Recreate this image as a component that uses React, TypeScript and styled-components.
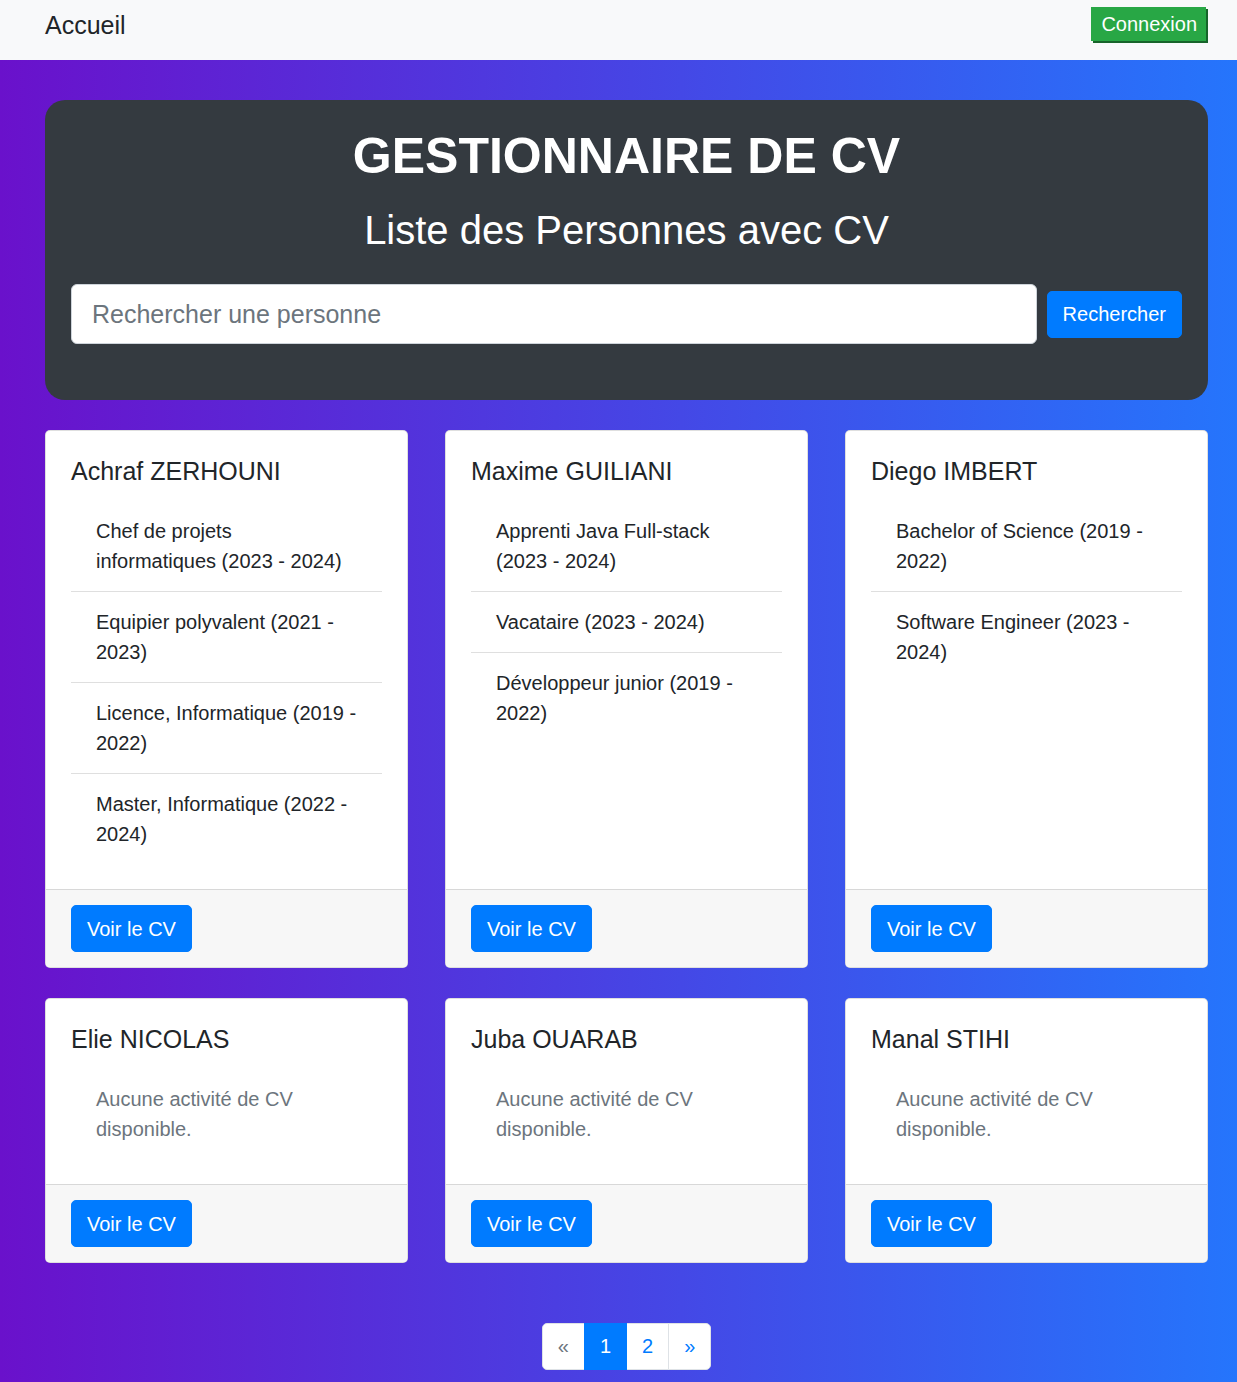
import React from "react";
import styled, { createGlobalStyle, css } from "styled-components";

const GlobalStyle = createGlobalStyle`
  html { font-size: 20px; }
  body {
    margin: 0;
    font-family: "Liberation Sans", Arial, Helvetica, sans-serif;
    color: #212529;
    line-height: 1.5;
    background: #fff;
  }
  * { box-sizing: border-box; }
`;

const Navbar = styled.nav`
  height: 60px;
  background: #f8f9fa;
  display: flex;
  justify-content: space-between;
  align-items: flex-start;
  padding: 7px 31px 0 45px;
`;

const Brand = styled.a`
  font-size: 25px;
  line-height: 36px;
  color: #212529;
  text-decoration: none;
`;

const LoginButton = styled.button`
  font-family: inherit;
  font-size: 20px;
  line-height: 24px;
  padding: 5px 9px 5px 10px;
  background: #28a745;
  color: #fff;
  border: none;
  border-radius: 0;
  box-shadow: 2px 2px 0 #17642a;
  cursor: pointer;
`;

const Main = styled.main`
  min-height: calc(100vh - 60px);
  background: linear-gradient(to right, #6a11cb, #2575fc);
  padding: 40px 29px 20px 45px;
`;

const Jumbotron = styled.section`
  background: #343a40;
  color: #fff;
  border-radius: 20px;
  padding: 26px 26px 56px;
  text-align: center;
`;

const Title = styled.h1`
  font-size: 50px;
  line-height: 60px;
  font-weight: 700;
  margin: 0 0 20px;
`;

const Subtitle = styled.h2`
  font-size: 40px;
  line-height: 48px;
  font-weight: 400;
  margin: 0 0 30px;
`;

const SearchForm = styled.form`
  display: flex;
  align-items: center;
`;

const SearchInput = styled.input`
  flex: 1;
  height: 60px;
  font-family: inherit;
  font-size: 25px;
  padding: 0 20px;
  border: 1px solid #ced4da;
  border-radius: 6px;
  color: #495057;
  background: #fff;
  &::placeholder { color: #6c757d; }
`;

const PrimaryButton = styled.button<{ $ml?: number }>`
  font-family: inherit;
  font-size: 20px;
  line-height: 30px;
  padding: 7.5px 15px;
  background: #007bff;
  color: #fff;
  border: 1px solid #007bff;
  border-radius: 5px;
  cursor: pointer;
  margin-left: ${(p) => p.$ml ?? 0}px;
`;

const Grid = styled.div`
  margin-top: 30px;
  display: grid;
  grid-template-columns: repeat(3, 1fr);
  column-gap: 37px;
  row-gap: 30px;
`;

const Card = styled.article`
  background: #fff;
  border: 1px solid rgba(0, 0, 0, 0.125);
  border-radius: 5px;
  display: flex;
  flex-direction: column;
  overflow: hidden;
`;

const CardBody = styled.div`
  flex: 1;
  padding: 25px;
`;

const CardTitle = styled.h5`
  font-size: 25px;
  line-height: 30px;
  font-weight: 400;
  margin: 0 0 15px;
`;

const List = styled.ul`
  list-style: none;
  margin: 0;
  padding: 0;
`;

const ListItem = styled.li<{ $muted?: boolean }>`
  padding: 15px 25px;
  font-size: 20px;
  line-height: 30px;
  border-bottom: 1px solid rgba(0, 0, 0, 0.125);
  color: ${(p) => (p.$muted ? "#6c757d" : "#212529")};
  &:last-child { border-bottom: none; }
`;

const CardFooter = styled.div`
  padding: 15px 25px;
  background: #f7f7f7;
  border-top: 1px solid rgba(0, 0, 0, 0.125);
`;

const Pagination = styled.ul`
  list-style: none;
  margin: 60px 0 0;
  padding: 0;
  display: flex;
  justify-content: center;
`;

const PageLink = styled.li<{ $active?: boolean; $disabled?: boolean }>`
  font-size: 20px;
  line-height: 25px;
  padding: 10px 15px;
  background: #fff;
  border: 1px solid #dee2e6;
  margin-left: -1px;
  color: #007bff;
  cursor: pointer;
  &:first-child { margin-left: 0; border-radius: 5px 0 0 5px; }
  &:last-child { border-radius: 0 5px 5px 0; }
  ${(p) =>
    p.$active &&
    css`
      background: #007bff;
      border-color: #007bff;
      color: #fff;
      position: relative;
      z-index: 1;
    `}
  ${(p) =>
    p.$disabled &&
    css`
      color: #6c757d;
      cursor: default;
    `}
`;

type Person = { name: string; items: string[] };

const people: Person[] = [
  {
    name: "Achraf ZERHOUNI",
    items: [
      "Chef de projets informatiques (2023 - 2024)",
      "Equipier polyvalent (2021 - 2023)",
      "Licence, Informatique (2019 - 2022)",
      "Master, Informatique (2022 - 2024)",
    ],
  },
  {
    name: "Maxime GUILIANI",
    items: [
      "Apprenti Java Full-stack (2023 - 2024)",
      "Vacataire (2023 - 2024)",
      "Développeur junior (2019 - 2022)",
    ],
  },
  {
    name: "Diego IMBERT",
    items: ["Bachelor of Science (2019 - 2022)", "Software Engineer (2023 - 2024)"],
  },
  { name: "Elie NICOLAS", items: [] },
  { name: "Juba OUARAB", items: [] },
  { name: "Manal STIHI", items: [] },
];

export default function App() {
  return (
    <>
      <GlobalStyle />
      <Navbar>
        <Brand href="#">Accueil</Brand>
        <LoginButton>Connexion</LoginButton>
      </Navbar>
      <Main>
        <Jumbotron>
          <Title>GESTIONNAIRE DE CV</Title>
          <Subtitle>Liste des Personnes avec CV</Subtitle>
          <SearchForm onSubmit={(e) => e.preventDefault()}>
            <SearchInput placeholder="Rechercher une personne" />
            <PrimaryButton $ml={10} type="submit">
              Rechercher
            </PrimaryButton>
          </SearchForm>
        </Jumbotron>
        <Grid>
          {people.map((p) => (
            <Card key={p.name}>
              <CardBody>
                <CardTitle>{p.name}</CardTitle>
                <List>
                  {p.items.length > 0 ? (
                    p.items.map((it) => <ListItem key={it}>{it}</ListItem>)
                  ) : (
                    <ListItem $muted>Aucune activité de CV disponible.</ListItem>
                  )}
                </List>
              </CardBody>
              <CardFooter>
                <PrimaryButton>Voir le CV</PrimaryButton>
              </CardFooter>
            </Card>
          ))}
        </Grid>
        <Pagination>
          <PageLink $disabled>«</PageLink>
          <PageLink $active>1</PageLink>
          <PageLink>2</PageLink>
          <PageLink>»</PageLink>
        </Pagination>
      </Main>
    </>
  );
}
